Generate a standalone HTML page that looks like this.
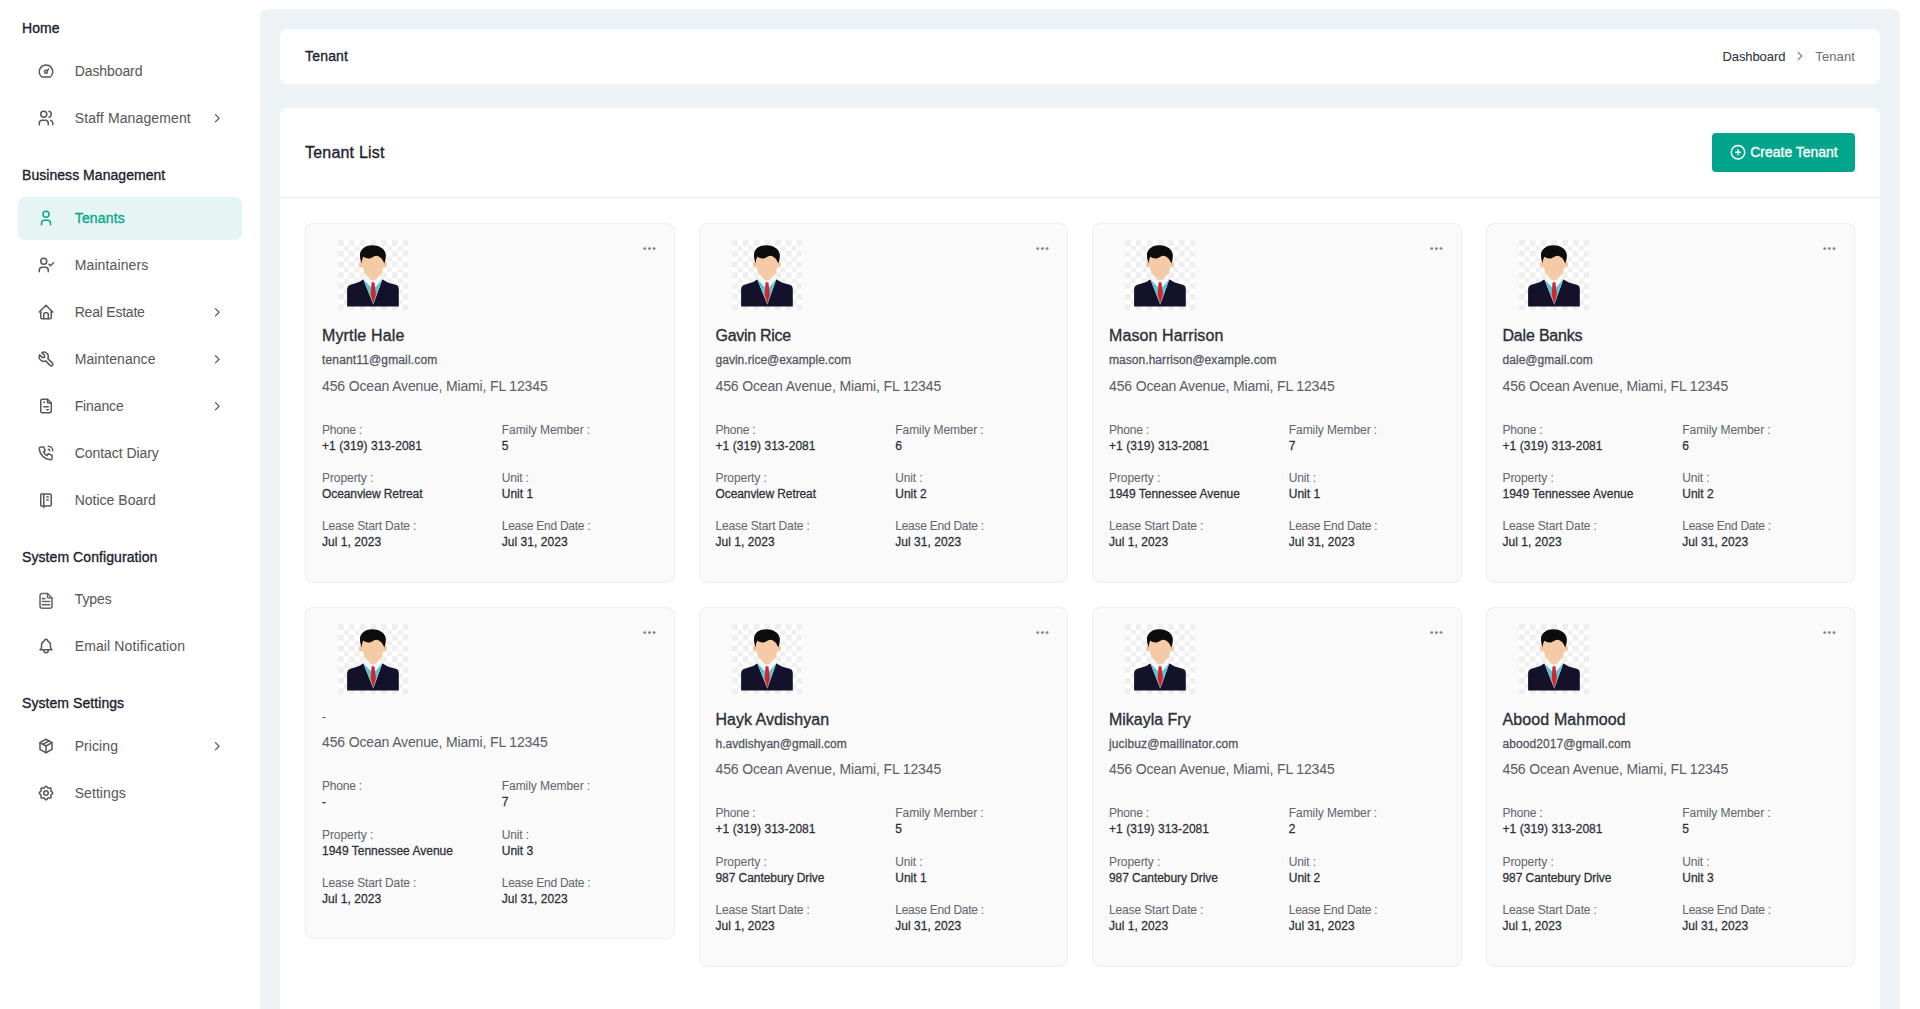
<!DOCTYPE html>
<html lang="en"><head><meta charset="utf-8"><title>Tenant</title>
<style>
*{box-sizing:border-box}
html,body{margin:0;padding:0}
body{width:1920px;height:1009px;overflow:hidden;background:#fff;position:relative;font-family:"Liberation Sans", sans-serif;font-size:14px;line-height:1.5;color:#5a5f69;-webkit-font-smoothing:antialiased;-webkit-text-stroke:.05px currentColor}
h4,h5,p,ul{margin:0;padding:0}
ul{list-style:none}
svg{display:block;flex:none}

/* ---------- sidebar ---------- */
.sidebar{position:absolute;left:0;top:0;width:260px;height:1009px;background:#fff}
.sidebar ul{position:absolute;left:18px;top:-3px;width:224px}
.cap{height:53px;padding:21px 0 0 4px;line-height:20px;font-size:14px;font-weight:400;-webkit-text-stroke:.34px currentColor;color:#1c2230;white-space:nowrap}
.cap.c52{height:52px}
.item{position:relative;height:43px;margin-bottom:4px;border-radius:7px;color:#585858;font-size:14px;line-height:43px;white-space:nowrap}
.item .ic{position:absolute;left:19px;top:12px;width:18px;height:18px;stroke-width:2}
.item .ic2{position:absolute;left:18px;top:13px;width:20px;height:20px;color:#686868}
.item .lbl{position:absolute;left:56.7px;top:0}
.item .chev{position:absolute;left:191.5px;top:14px;width:14.5px;height:14.5px;stroke-width:2}
.item.active{background:#e5f5f3;color:#0ea58d}
.item.active .lbl{font-weight:400;-webkit-text-stroke:.34px currentColor}

/* ---------- main ---------- */
.main{position:absolute;left:260px;top:9px;width:1640px;height:1000px;background:#edf2f7;border-radius:8px 8px 0 0}
.crumb{position:absolute;left:20px;top:20px;width:1600px;height:55px;background:#fff;border-radius:7px}
.title{position:absolute;left:25px;top:0;line-height:55px;font-size:14px;font-weight:400;-webkit-text-stroke:.34px currentColor;color:#1c2230}
.bc{position:absolute;right:25px;top:0;height:55px;display:flex;align-items:center;font-size:13px;line-height:55px}
.bc1{color:#2a3140}
.bc2{color:#6b6f75}
.bcchev{width:14px;height:14px;margin:0 8px;color:#83888f;stroke-width:2.2}
.panel{position:absolute;left:20px;top:99px;width:1600px;height:901px;background:#fff;border-radius:7px 7px 0 0}
.phead{position:relative;height:90px;border-bottom:1px solid #ebebeb}
.ptitle{position:absolute;left:25px;top:0;line-height:89px;font-size:16px;font-weight:400;-webkit-text-stroke:.34px currentColor;color:#1c2230}
.btn{position:absolute;right:25px;top:25px;width:143px;height:39px;border-radius:4px;background:#00a58c;color:#fff;display:flex;align-items:center;justify-content:center;font-size:14px;font-weight:400;-webkit-text-stroke:.34px currentColor;white-space:nowrap}
.btn .plus{width:18px;height:18px;margin-right:3px;stroke-width:2}

/* ---------- cards ---------- */
.cards{position:absolute;left:25px;top:115px;width:1550px;display:grid;grid-template-columns:repeat(4,369.5px);column-gap:24px;row-gap:24px;align-items:start}
.card{position:relative;border:1px solid #eee;border-radius:8px;background:#fafafa;padding:16px 16px 0 16px;height:359.8px}
.card.noname{height:332.6px}
.dots{position:absolute;right:16px;top:16px;width:16px;height:16px;color:#7a889c}
.avatar{width:70px;height:70px;margin:0 0 16px 16px;background:conic-gradient(#fff 25%,#efefef 0 50%,#fff 0 75%,#efefef 0) 0 0/10.77px 10.77px}
.name{font-size:16px;line-height:19.2px;margin-bottom:8px;font-weight:400;-webkit-text-stroke:.34px currentColor;color:#2b3038;white-space:nowrap}
.email,.dash{font-size:12px;line-height:14.4px;margin-bottom:8px;font-weight:400;-webkit-text-stroke:.255px currentColor;color:#50555e;white-space:nowrap}
.dash{font-weight:400;-webkit-text-stroke:.05px currentColor}
.addr{font-size:14px;line-height:21px;margin-bottom:24px;color:#5a5f69;white-space:nowrap}
.grid{display:grid;grid-template-columns:179.75px 1fr}
.f{margin-bottom:16px;white-space:nowrap}
.k{font-size:12px;line-height:18px;color:#62676f}
.v{font-size:12px;line-height:14.4px;font-weight:400;-webkit-text-stroke:.255px currentColor;color:#2b3038}

</style></head>
<body>

<nav class="sidebar"><ul>
<li class="cap first" style="letter-spacing:0.055px">Home</li>
<li class="item"><svg class="ic" viewBox="0 0 24 24" fill="none" stroke="currentColor" stroke-width="2" stroke-linecap="round" stroke-linejoin="round"><circle cx="12" cy="13" r="2"/><path d="M13.45 11.55L15.5 9.5"/><path d="M6.4 20a9 9 0 1 1 11.2 0z"/></svg><span class="lbl" style="letter-spacing:-0.087px">Dashboard</span></li>
<li class="item"><svg class="ic" viewBox="0 0 24 24" fill="none" stroke="currentColor" stroke-width="2" stroke-linecap="round" stroke-linejoin="round"><circle cx="9" cy="7" r="4"/><path d="M3 21v-2a4 4 0 0 1 4 -4h4a4 4 0 0 1 4 4v2"/><path d="M16 3.13a4 4 0 0 1 0 7.75"/><path d="M21 21v-2a4 4 0 0 0 -3 -3.85"/></svg><span class="lbl" style="letter-spacing:0.128px">Staff Management</span><svg class="chev" viewBox="0 0 24 24" fill="none" stroke="currentColor" stroke-width="2" stroke-linecap="round" stroke-linejoin="round"><path d="M9 6l6 6l-6 6"/></svg></li>
<li class="cap" style="letter-spacing:0.046px">Business Management</li>
<li class="item active"><svg class="ic" viewBox="0 0 24 24" fill="none" stroke="currentColor" stroke-width="2" stroke-linecap="round" stroke-linejoin="round"><circle cx="12" cy="7" r="4"/><path d="M6 21v-2a4 4 0 0 1 4 -4h4a4 4 0 0 1 4 4v2"/></svg><span class="lbl" style="letter-spacing:0.192px">Tenants</span></li>
<li class="item"><svg class="ic" viewBox="0 0 24 24" fill="none" stroke="currentColor" stroke-width="2" stroke-linecap="round" stroke-linejoin="round"><circle cx="9" cy="7" r="4"/><path d="M3 21v-2a4 4 0 0 1 4 -4h4a4 4 0 0 1 4 4v2"/><path d="M16 11l2 2l4 -4"/></svg><span class="lbl" style="letter-spacing:0.121px">Maintainers</span></li>
<li class="item"><svg class="ic" viewBox="0 0 24 24" fill="none" stroke="currentColor" stroke-width="2" stroke-linecap="round" stroke-linejoin="round"><path d="M5 12H3l9 -9l9 9h-2"/><path d="M5 12v7a2 2 0 0 0 2 2h10a2 2 0 0 0 2 -2v-7"/><path d="M9 21v-6a2 2 0 0 1 2 -2h2a2 2 0 0 1 2 2v6"/></svg><span class="lbl" style="letter-spacing:-0.222px">Real Estate</span><svg class="chev" viewBox="0 0 24 24" fill="none" stroke="currentColor" stroke-width="2" stroke-linecap="round" stroke-linejoin="round"><path d="M9 6l6 6l-6 6"/></svg></li>
<li class="item"><svg class="ic" viewBox="0 0 24 24" fill="none" stroke="currentColor" stroke-width="2" stroke-linecap="round" stroke-linejoin="round"><path d="M7 10h3v-3l-3.5 -3.5a6 6 0 0 1 8 8l6 6a2 2 0 0 1 -3 3l-6 -6a6 6 0 0 1 -8 -8l3.5 3.5"/></svg><span class="lbl" style="letter-spacing:0.058px">Maintenance</span><svg class="chev" viewBox="0 0 24 24" fill="none" stroke="currentColor" stroke-width="2" stroke-linecap="round" stroke-linejoin="round"><path d="M9 6l6 6l-6 6"/></svg></li>
<li class="item"><svg class="ic" viewBox="0 0 24 24" fill="none" stroke="currentColor" stroke-width="2" stroke-linecap="round" stroke-linejoin="round"><path d="M14 3v4a1 1 0 0 0 1 1h4"/><path d="M17 21h-10a2 2 0 0 1 -2 -2v-14a2 2 0 0 1 2 -2h7l5 5v11a2 2 0 0 1 -2 2z"/><path d="M9 7h1"/><path d="M9 13h6"/><path d="M13 17h2"/></svg><span class="lbl" style="letter-spacing:-0.118px">Finance</span><svg class="chev" viewBox="0 0 24 24" fill="none" stroke="currentColor" stroke-width="2" stroke-linecap="round" stroke-linejoin="round"><path d="M9 6l6 6l-6 6"/></svg></li>
<li class="item"><svg class="ic" viewBox="0 0 24 24" fill="none" stroke="currentColor" stroke-width="2" stroke-linecap="round" stroke-linejoin="round"><path d="M5 4h4l2 5l-2.5 1.5a11 11 0 0 0 5 5l1.5 -2.5l5 2v4a2 2 0 0 1 -2 2a16 16 0 0 1 -15 -15a2 2 0 0 1 2 -2"/><path d="M15 7a2 2 0 0 1 2 2"/><path d="M15 3a6 6 0 0 1 6 6"/></svg><span class="lbl" style="letter-spacing:-0.054px">Contact Diary</span></li>
<li class="item"><svg class="ic" viewBox="0 0 24 24" fill="none" stroke="currentColor" stroke-width="2" stroke-linecap="round" stroke-linejoin="round"><path d="M6 4h11a2 2 0 0 1 2 2v12a2 2 0 0 1 -2 2h-11a1 1 0 0 1 -1 -1v-14a1 1 0 0 1 1 -1m3 0v18"/><path d="M13 8h2"/><path d="M13 12h2"/></svg><span class="lbl" style="letter-spacing:0.007px">Notice Board</span></li>
<li class="cap c52" style="letter-spacing:0.077px">System Configuration</li>
<li class="item"><svg class="ic2" viewBox="0 0 20 20" fill="none" stroke="currentColor" stroke-width="1.55" stroke-linecap="round" stroke-linejoin="round"><path d="M11.500 2.500H6a2 2 0 0 0-2 2v10.700a2 2 0 0 0 2 2h8a2 2 0 0 0 2-2V7z"/><path d="M11.500 2.500V6a1 1 0 0 0 1 1H16"/><path d="M6.300 7.600h2.500"/><path d="M6.300 10.550h7.300"/><path d="M6.300 13.650h7.300"/></svg><span class="lbl" style="letter-spacing:-0.072px">Types</span></li>
<li class="item"><svg class="ic" viewBox="0 0 24 24" fill="none" stroke="currentColor" stroke-width="2" stroke-linecap="round" stroke-linejoin="round"><path d="M10 5a2 2 0 0 1 4 0a7 7 0 0 1 4 6v3a4 4 0 0 0 2 3h-16a4 4 0 0 0 2 -3v-3a7 7 0 0 1 4 -6"/><path d="M9 17v1a3 3 0 0 0 6 0v-1"/></svg><span class="lbl" style="letter-spacing:0.130px">Email Notification</span></li>
<li class="cap" style="letter-spacing:0.069px">System Settings</li>
<li class="item"><svg class="ic" viewBox="0 0 24 24" fill="none" stroke="currentColor" stroke-width="2" stroke-linecap="round" stroke-linejoin="round"><path d="M12 3l8 4.5v9l-8 4.5l-8 -4.5v-9z"/><path d="M12 12l8 -4.5"/><path d="M12 12v9"/><path d="M12 12l-8 -4.5"/><path d="M16 5.25l-8 4.5"/></svg><span class="lbl" style="letter-spacing:0.074px">Pricing</span><svg class="chev" viewBox="0 0 24 24" fill="none" stroke="currentColor" stroke-width="2" stroke-linecap="round" stroke-linejoin="round"><path d="M9 6l6 6l-6 6"/></svg></li>
<li class="item"><svg class="ic" viewBox="0 0 24 24" fill="none" stroke="currentColor" stroke-width="2" stroke-linecap="round" stroke-linejoin="round"><path d="M10.325 4.317c.426 -1.756 2.924 -1.756 3.35 0a1.724 1.724 0 0 0 2.573 1.066c1.543 -.94 3.31 .826 2.37 2.37a1.724 1.724 0 0 0 1.065 2.572c1.756 .426 1.756 2.924 0 3.35a1.724 1.724 0 0 0 -1.066 2.573c.94 1.543 -.826 3.31 -2.37 2.37a1.724 1.724 0 0 0 -2.572 1.065c-.426 1.756 -2.924 1.756 -3.35 0a1.724 1.724 0 0 0 -2.573 -1.066c-1.543 .94 -3.31 -.826 -2.37 -2.37a1.724 1.724 0 0 0 -1.065 -2.572c-1.756 -.426 -1.756 -2.924 0 -3.35a1.724 1.724 0 0 0 1.066 -2.573c-.94 -1.543 .826 -3.31 2.37 -2.37c1 .608 2.296 .07 2.572 -1.065z"/><circle cx="12" cy="12" r="3"/></svg><span class="lbl" style="letter-spacing:0.066px">Settings</span></li>
</ul></nav>
<main class="main">
<header class="crumb"><h4 class="title" style="letter-spacing:0.190px">Tenant</h4>
<div class="bc"><span class="bc1" style="letter-spacing:-0.082px">Dashboard</span><svg class="bcchev" viewBox="0 1.700 24 24" fill="none" stroke="currentColor" stroke-width="2" stroke-linecap="round" stroke-linejoin="round"><path d="M9 6l6 6l-6 6"/></svg><span class="bc2" style="letter-spacing:0.112px">Tenant</span></div></header>
<section class="panel">
<div class="phead"><h4 class="ptitle" style="letter-spacing:0.202px">Tenant List</h4><a class="btn"><svg class="plus" viewBox="0 1 24 24" fill="none" stroke="currentColor" stroke-width="2" stroke-linecap="round" stroke-linejoin="round"><circle cx="12" cy="12" r="9"/><path d="M9 12h6"/><path d="M12 9v6"/></svg><span style="letter-spacing:-0.016px">Create Tenant</span></a></div>
<div class="cards">
<article class="card"><svg class="dots" viewBox="0.9 -0.9 24 24" fill="currentColor"><circle cx="5" cy="12" r="2.2"/><circle cx="12" cy="12" r="2.2"/><circle cx="19" cy="12" r="2.2"/></svg><svg class="avatar" viewBox="0 0 70 70" role="img" aria-label="Tenant photo"><path d="M9.1 66.600V50c0-3 1-4.500 3.500-5.300l8.700-2.600 4-2.900 10 25.300 9-25.300 5.500 3.400 8.600 2.300c2 .6 2.400 2.100 2.400 5.100v16.600z" fill="#14122b"/><path d="M25.300 39.200L35.300 64.500 44.300 39.200z" fill="#5cc4cc"/><path d="M25.300 39.200L30 38.300 35.100 40.500 40 38.300 44.300 39.200 37.200 47.500 35.100 43 33.200 47.500z" fill="#f3f6f9"/><path d="M33.600 42.300h2.800l1.500 12.100-2.600 9.900-2.600-9.900z" fill="#d8232f"/><ellipse cx="22.600" cy="24.600" rx="1.700" ry="2.800" fill="#f2c6a2"/><ellipse cx="47.400" cy="24.600" rx="1.700" ry="2.800" fill="#f2c6a2"/><path d="M23 14c0-5 5-8 12-8s12 3 12 8l-.6 10c-.3 2.500-1 4-1.800 5.500L44.100 32.900 38.300 39.100c-1.600 1.600-4.800 1.600-6.400 0L26.300 32.900 25.400 29.500c-.8-1.500-1.500-3-1.800-5.500z" fill="#f4caa7"/><path d="M23.400 23.500C22.500 20 21.800 17 22 14.300 22.500 8.500 28 5.200 34.300 5.200 41 5.200 47.300 8.500 47.800 15 48 18 47.300 21 46.400 23.500 45.500 21.500 44.500 20 43.500 18.600 42 16.800 40 15.700 38.200 15.700 35.500 15.700 33.500 18.600 30.700 18.600 28.500 18.600 27 17.500 25.200 16.800 24.300 19 23.800 21 23.400 23.500Z" fill="#0d0b0c"/></svg>
<h5 class="name" style="letter-spacing:0.141px">Myrtle Hale</h5><p class="email" style="letter-spacing:0.148px">tenant11@gmail.com</p><p class="addr" style="letter-spacing:-0.147px">456 Ocean Avenue, Miami, FL 12345</p>
<div class="grid">
<div class="f"><div class="k" style="letter-spacing:-0.210px">Phone :</div><div class="v" style="letter-spacing:0.059px">+1 (319) 313-2081</div></div>
<div class="f"><div class="k" style="letter-spacing:-0.064px">Family Member :</div><div class="v" style="letter-spacing:0.141px">5</div></div>
<div class="f"><div class="k" style="letter-spacing:-0.072px">Property :</div><div class="v" style="letter-spacing:-0.095px">Oceanview Retreat</div></div>
<div class="f"><div class="k" style="letter-spacing:-0.146px">Unit :</div><div class="v" style="letter-spacing:0.005px">Unit 1</div></div>
<div class="f"><div class="k" style="letter-spacing:-0.135px">Lease Start Date :</div><div class="v" style="letter-spacing:0.040px">Jul 1, 2023</div></div>
<div class="f"><div class="k" style="letter-spacing:-0.255px">Lease End Date :</div><div class="v" style="letter-spacing:0.049px">Jul 31, 2023</div></div>
</div></article>
<article class="card"><svg class="dots" viewBox="0.9 -0.9 24 24" fill="currentColor"><circle cx="5" cy="12" r="2.2"/><circle cx="12" cy="12" r="2.2"/><circle cx="19" cy="12" r="2.2"/></svg><svg class="avatar" viewBox="0 0 70 70" role="img" aria-label="Tenant photo"><path d="M9.1 66.600V50c0-3 1-4.500 3.500-5.300l8.700-2.600 4-2.900 10 25.300 9-25.300 5.500 3.400 8.600 2.300c2 .6 2.400 2.100 2.400 5.100v16.600z" fill="#14122b"/><path d="M25.300 39.200L35.300 64.500 44.300 39.200z" fill="#5cc4cc"/><path d="M25.300 39.200L30 38.300 35.100 40.500 40 38.300 44.300 39.200 37.200 47.500 35.100 43 33.200 47.500z" fill="#f3f6f9"/><path d="M33.600 42.300h2.800l1.500 12.100-2.600 9.900-2.600-9.900z" fill="#d8232f"/><ellipse cx="22.600" cy="24.600" rx="1.700" ry="2.800" fill="#f2c6a2"/><ellipse cx="47.400" cy="24.600" rx="1.700" ry="2.800" fill="#f2c6a2"/><path d="M23 14c0-5 5-8 12-8s12 3 12 8l-.6 10c-.3 2.500-1 4-1.800 5.500L44.100 32.900 38.300 39.100c-1.600 1.600-4.800 1.600-6.400 0L26.300 32.900 25.400 29.500c-.8-1.500-1.500-3-1.800-5.500z" fill="#f4caa7"/><path d="M23.400 23.500C22.500 20 21.800 17 22 14.300 22.500 8.500 28 5.200 34.300 5.200 41 5.200 47.300 8.500 47.800 15 48 18 47.300 21 46.400 23.500 45.500 21.500 44.500 20 43.500 18.600 42 16.800 40 15.700 38.200 15.700 35.500 15.700 33.500 18.600 30.700 18.600 28.500 18.600 27 17.500 25.200 16.800 24.300 19 23.800 21 23.400 23.500Z" fill="#0d0b0c"/></svg>
<h5 class="name" style="letter-spacing:-0.287px">Gavin Rice</h5><p class="email" style="letter-spacing:0.025px">gavin.rice@example.com</p><p class="addr" style="letter-spacing:-0.147px">456 Ocean Avenue, Miami, FL 12345</p>
<div class="grid">
<div class="f"><div class="k" style="letter-spacing:-0.210px">Phone :</div><div class="v" style="letter-spacing:0.059px">+1 (319) 313-2081</div></div>
<div class="f"><div class="k" style="letter-spacing:-0.064px">Family Member :</div><div class="v" style="letter-spacing:0.141px">6</div></div>
<div class="f"><div class="k" style="letter-spacing:-0.072px">Property :</div><div class="v" style="letter-spacing:-0.095px">Oceanview Retreat</div></div>
<div class="f"><div class="k" style="letter-spacing:-0.146px">Unit :</div><div class="v" style="letter-spacing:0.005px">Unit 2</div></div>
<div class="f"><div class="k" style="letter-spacing:-0.135px">Lease Start Date :</div><div class="v" style="letter-spacing:0.040px">Jul 1, 2023</div></div>
<div class="f"><div class="k" style="letter-spacing:-0.255px">Lease End Date :</div><div class="v" style="letter-spacing:0.049px">Jul 31, 2023</div></div>
</div></article>
<article class="card"><svg class="dots" viewBox="0.9 -0.9 24 24" fill="currentColor"><circle cx="5" cy="12" r="2.2"/><circle cx="12" cy="12" r="2.2"/><circle cx="19" cy="12" r="2.2"/></svg><svg class="avatar" viewBox="0 0 70 70" role="img" aria-label="Tenant photo"><path d="M9.1 66.600V50c0-3 1-4.500 3.500-5.300l8.700-2.600 4-2.900 10 25.300 9-25.300 5.500 3.400 8.600 2.300c2 .6 2.400 2.100 2.400 5.100v16.600z" fill="#14122b"/><path d="M25.300 39.200L35.300 64.500 44.300 39.200z" fill="#5cc4cc"/><path d="M25.300 39.200L30 38.300 35.100 40.500 40 38.300 44.300 39.200 37.200 47.500 35.100 43 33.200 47.500z" fill="#f3f6f9"/><path d="M33.600 42.300h2.800l1.500 12.100-2.600 9.900-2.600-9.900z" fill="#d8232f"/><ellipse cx="22.600" cy="24.600" rx="1.700" ry="2.800" fill="#f2c6a2"/><ellipse cx="47.400" cy="24.600" rx="1.700" ry="2.800" fill="#f2c6a2"/><path d="M23 14c0-5 5-8 12-8s12 3 12 8l-.6 10c-.3 2.500-1 4-1.800 5.500L44.100 32.900 38.300 39.100c-1.600 1.600-4.800 1.600-6.400 0L26.300 32.900 25.400 29.500c-.8-1.500-1.500-3-1.800-5.500z" fill="#f4caa7"/><path d="M23.400 23.500C22.500 20 21.800 17 22 14.300 22.500 8.500 28 5.200 34.300 5.200 41 5.200 47.300 8.500 47.800 15 48 18 47.300 21 46.400 23.500 45.500 21.500 44.500 20 43.500 18.600 42 16.800 40 15.700 38.200 15.700 35.500 15.700 33.500 18.600 30.700 18.600 28.500 18.600 27 17.500 25.200 16.800 24.300 19 23.800 21 23.400 23.500Z" fill="#0d0b0c"/></svg>
<h5 class="name" style="letter-spacing:0.105px">Mason Harrison</h5><p class="email" style="letter-spacing:0.049px">mason.harrison@example.com</p><p class="addr" style="letter-spacing:-0.147px">456 Ocean Avenue, Miami, FL 12345</p>
<div class="grid">
<div class="f"><div class="k" style="letter-spacing:-0.210px">Phone :</div><div class="v" style="letter-spacing:0.059px">+1 (319) 313-2081</div></div>
<div class="f"><div class="k" style="letter-spacing:-0.064px">Family Member :</div><div class="v" style="letter-spacing:0.141px">7</div></div>
<div class="f"><div class="k" style="letter-spacing:-0.072px">Property :</div><div class="v" style="letter-spacing:-0.005px">1949 Tennessee Avenue</div></div>
<div class="f"><div class="k" style="letter-spacing:-0.146px">Unit :</div><div class="v" style="letter-spacing:0.005px">Unit 1</div></div>
<div class="f"><div class="k" style="letter-spacing:-0.135px">Lease Start Date :</div><div class="v" style="letter-spacing:0.040px">Jul 1, 2023</div></div>
<div class="f"><div class="k" style="letter-spacing:-0.255px">Lease End Date :</div><div class="v" style="letter-spacing:0.049px">Jul 31, 2023</div></div>
</div></article>
<article class="card"><svg class="dots" viewBox="0.9 -0.9 24 24" fill="currentColor"><circle cx="5" cy="12" r="2.2"/><circle cx="12" cy="12" r="2.2"/><circle cx="19" cy="12" r="2.2"/></svg><svg class="avatar" viewBox="0 0 70 70" role="img" aria-label="Tenant photo"><path d="M9.1 66.600V50c0-3 1-4.500 3.500-5.300l8.700-2.600 4-2.900 10 25.300 9-25.300 5.500 3.400 8.600 2.300c2 .6 2.400 2.100 2.400 5.100v16.600z" fill="#14122b"/><path d="M25.300 39.200L35.300 64.500 44.300 39.200z" fill="#5cc4cc"/><path d="M25.300 39.200L30 38.300 35.100 40.500 40 38.300 44.300 39.200 37.200 47.500 35.100 43 33.200 47.500z" fill="#f3f6f9"/><path d="M33.600 42.300h2.800l1.500 12.100-2.600 9.900-2.600-9.900z" fill="#d8232f"/><ellipse cx="22.600" cy="24.600" rx="1.700" ry="2.800" fill="#f2c6a2"/><ellipse cx="47.400" cy="24.600" rx="1.700" ry="2.800" fill="#f2c6a2"/><path d="M23 14c0-5 5-8 12-8s12 3 12 8l-.6 10c-.3 2.500-1 4-1.800 5.500L44.100 32.900 38.300 39.100c-1.600 1.600-4.800 1.600-6.400 0L26.300 32.900 25.400 29.500c-.8-1.500-1.500-3-1.800-5.500z" fill="#f4caa7"/><path d="M23.400 23.500C22.500 20 21.800 17 22 14.300 22.500 8.500 28 5.200 34.300 5.200 41 5.200 47.300 8.500 47.800 15 48 18 47.300 21 46.400 23.500 45.500 21.500 44.500 20 43.500 18.600 42 16.800 40 15.700 38.200 15.700 35.500 15.700 33.500 18.600 30.700 18.600 28.500 18.600 27 17.500 25.200 16.800 24.300 19 23.800 21 23.400 23.500Z" fill="#0d0b0c"/></svg>
<h5 class="name" style="letter-spacing:-0.192px">Dale Banks</h5><p class="email" style="letter-spacing:0.045px">dale@gmail.com</p><p class="addr" style="letter-spacing:-0.147px">456 Ocean Avenue, Miami, FL 12345</p>
<div class="grid">
<div class="f"><div class="k" style="letter-spacing:-0.210px">Phone :</div><div class="v" style="letter-spacing:0.059px">+1 (319) 313-2081</div></div>
<div class="f"><div class="k" style="letter-spacing:-0.064px">Family Member :</div><div class="v" style="letter-spacing:0.141px">6</div></div>
<div class="f"><div class="k" style="letter-spacing:-0.072px">Property :</div><div class="v" style="letter-spacing:-0.005px">1949 Tennessee Avenue</div></div>
<div class="f"><div class="k" style="letter-spacing:-0.146px">Unit :</div><div class="v" style="letter-spacing:0.005px">Unit 2</div></div>
<div class="f"><div class="k" style="letter-spacing:-0.135px">Lease Start Date :</div><div class="v" style="letter-spacing:0.040px">Jul 1, 2023</div></div>
<div class="f"><div class="k" style="letter-spacing:-0.255px">Lease End Date :</div><div class="v" style="letter-spacing:0.049px">Jul 31, 2023</div></div>
</div></article>
<article class="card noname"><svg class="dots" viewBox="0.9 -0.9 24 24" fill="currentColor"><circle cx="5" cy="12" r="2.2"/><circle cx="12" cy="12" r="2.2"/><circle cx="19" cy="12" r="2.2"/></svg><svg class="avatar" viewBox="0 0 70 70" role="img" aria-label="Tenant photo"><path d="M9.1 66.600V50c0-3 1-4.500 3.500-5.300l8.700-2.600 4-2.900 10 25.300 9-25.300 5.500 3.400 8.600 2.300c2 .6 2.400 2.100 2.400 5.100v16.600z" fill="#14122b"/><path d="M25.300 39.200L35.300 64.500 44.300 39.200z" fill="#5cc4cc"/><path d="M25.300 39.200L30 38.300 35.100 40.500 40 38.300 44.300 39.200 37.200 47.500 35.100 43 33.200 47.500z" fill="#f3f6f9"/><path d="M33.600 42.300h2.800l1.500 12.100-2.600 9.900-2.600-9.900z" fill="#d8232f"/><ellipse cx="22.600" cy="24.600" rx="1.700" ry="2.800" fill="#f2c6a2"/><ellipse cx="47.400" cy="24.600" rx="1.700" ry="2.800" fill="#f2c6a2"/><path d="M23 14c0-5 5-8 12-8s12 3 12 8l-.6 10c-.3 2.500-1 4-1.800 5.500L44.100 32.900 38.300 39.100c-1.600 1.600-4.800 1.600-6.400 0L26.300 32.900 25.400 29.500c-.8-1.500-1.500-3-1.800-5.500z" fill="#f4caa7"/><path d="M23.400 23.500C22.500 20 21.800 17 22 14.300 22.500 8.500 28 5.200 34.300 5.200 41 5.200 47.300 8.500 47.800 15 48 18 47.300 21 46.400 23.500 45.500 21.500 44.500 20 43.500 18.600 42 16.800 40 15.700 38.200 15.700 35.500 15.700 33.500 18.600 30.700 18.600 28.500 18.600 27 17.500 25.200 16.800 24.300 19 23.800 21 23.400 23.500Z" fill="#0d0b0c"/></svg>
<p class="dash" style="letter-spacing:-0.672px">-</p><p class="addr" style="letter-spacing:-0.147px">456 Ocean Avenue, Miami, FL 12345</p>
<div class="grid">
<div class="f"><div class="k" style="letter-spacing:-0.210px">Phone :</div><div class="v" style="letter-spacing:0.078px">-</div></div>
<div class="f"><div class="k" style="letter-spacing:-0.064px">Family Member :</div><div class="v" style="letter-spacing:0.141px">7</div></div>
<div class="f"><div class="k" style="letter-spacing:-0.072px">Property :</div><div class="v" style="letter-spacing:-0.005px">1949 Tennessee Avenue</div></div>
<div class="f"><div class="k" style="letter-spacing:-0.146px">Unit :</div><div class="v" style="letter-spacing:0.005px">Unit 3</div></div>
<div class="f"><div class="k" style="letter-spacing:-0.135px">Lease Start Date :</div><div class="v" style="letter-spacing:0.040px">Jul 1, 2023</div></div>
<div class="f"><div class="k" style="letter-spacing:-0.255px">Lease End Date :</div><div class="v" style="letter-spacing:0.049px">Jul 31, 2023</div></div>
</div></article>
<article class="card"><svg class="dots" viewBox="0.9 -0.9 24 24" fill="currentColor"><circle cx="5" cy="12" r="2.2"/><circle cx="12" cy="12" r="2.2"/><circle cx="19" cy="12" r="2.2"/></svg><svg class="avatar" viewBox="0 0 70 70" role="img" aria-label="Tenant photo"><path d="M9.1 66.600V50c0-3 1-4.500 3.500-5.300l8.700-2.600 4-2.900 10 25.300 9-25.300 5.500 3.400 8.600 2.300c2 .6 2.400 2.100 2.400 5.100v16.600z" fill="#14122b"/><path d="M25.300 39.200L35.300 64.500 44.300 39.200z" fill="#5cc4cc"/><path d="M25.300 39.200L30 38.300 35.100 40.500 40 38.300 44.300 39.200 37.200 47.500 35.100 43 33.200 47.500z" fill="#f3f6f9"/><path d="M33.600 42.300h2.800l1.500 12.100-2.600 9.900-2.600-9.900z" fill="#d8232f"/><ellipse cx="22.600" cy="24.600" rx="1.700" ry="2.800" fill="#f2c6a2"/><ellipse cx="47.400" cy="24.600" rx="1.700" ry="2.800" fill="#f2c6a2"/><path d="M23 14c0-5 5-8 12-8s12 3 12 8l-.6 10c-.3 2.500-1 4-1.800 5.500L44.100 32.900 38.300 39.100c-1.600 1.600-4.800 1.600-6.400 0L26.300 32.900 25.400 29.500c-.8-1.500-1.500-3-1.800-5.500z" fill="#f4caa7"/><path d="M23.400 23.500C22.500 20 21.800 17 22 14.300 22.500 8.500 28 5.200 34.300 5.200 41 5.200 47.300 8.500 47.800 15 48 18 47.300 21 46.400 23.500 45.500 21.500 44.500 20 43.500 18.600 42 16.800 40 15.700 38.200 15.700 35.500 15.700 33.500 18.600 30.700 18.600 28.500 18.600 27 17.500 25.200 16.800 24.300 19 23.800 21 23.400 23.500Z" fill="#0d0b0c"/></svg>
<h5 class="name">Hayk Avdishyan</h5><p class="email" style="letter-spacing:0.020px">h.avdishyan@gmail.com</p><p class="addr" style="letter-spacing:-0.147px">456 Ocean Avenue, Miami, FL 12345</p>
<div class="grid">
<div class="f"><div class="k" style="letter-spacing:-0.210px">Phone :</div><div class="v" style="letter-spacing:0.059px">+1 (319) 313-2081</div></div>
<div class="f"><div class="k" style="letter-spacing:-0.064px">Family Member :</div><div class="v" style="letter-spacing:0.141px">5</div></div>
<div class="f"><div class="k" style="letter-spacing:-0.072px">Property :</div><div class="v" style="letter-spacing:-0.060px">987 Cantebury Drive</div></div>
<div class="f"><div class="k" style="letter-spacing:-0.146px">Unit :</div><div class="v" style="letter-spacing:0.005px">Unit 1</div></div>
<div class="f"><div class="k" style="letter-spacing:-0.135px">Lease Start Date :</div><div class="v" style="letter-spacing:0.040px">Jul 1, 2023</div></div>
<div class="f"><div class="k" style="letter-spacing:-0.255px">Lease End Date :</div><div class="v" style="letter-spacing:0.049px">Jul 31, 2023</div></div>
</div></article>
<article class="card"><svg class="dots" viewBox="0.9 -0.9 24 24" fill="currentColor"><circle cx="5" cy="12" r="2.2"/><circle cx="12" cy="12" r="2.2"/><circle cx="19" cy="12" r="2.2"/></svg><svg class="avatar" viewBox="0 0 70 70" role="img" aria-label="Tenant photo"><path d="M9.1 66.600V50c0-3 1-4.500 3.500-5.300l8.700-2.600 4-2.900 10 25.300 9-25.300 5.500 3.400 8.600 2.300c2 .6 2.400 2.100 2.400 5.100v16.600z" fill="#14122b"/><path d="M25.300 39.200L35.300 64.500 44.300 39.200z" fill="#5cc4cc"/><path d="M25.300 39.200L30 38.300 35.100 40.500 40 38.300 44.300 39.200 37.200 47.500 35.100 43 33.200 47.500z" fill="#f3f6f9"/><path d="M33.600 42.300h2.800l1.500 12.100-2.600 9.900-2.600-9.900z" fill="#d8232f"/><ellipse cx="22.600" cy="24.600" rx="1.700" ry="2.800" fill="#f2c6a2"/><ellipse cx="47.400" cy="24.600" rx="1.700" ry="2.800" fill="#f2c6a2"/><path d="M23 14c0-5 5-8 12-8s12 3 12 8l-.6 10c-.3 2.500-1 4-1.800 5.500L44.100 32.900 38.300 39.100c-1.600 1.600-4.800 1.600-6.400 0L26.300 32.900 25.400 29.500c-.8-1.500-1.500-3-1.800-5.500z" fill="#f4caa7"/><path d="M23.400 23.500C22.500 20 21.800 17 22 14.300 22.500 8.500 28 5.200 34.300 5.200 41 5.200 47.300 8.500 47.800 15 48 18 47.300 21 46.400 23.500 45.500 21.500 44.500 20 43.500 18.600 42 16.800 40 15.700 38.200 15.700 35.500 15.700 33.500 18.600 30.700 18.600 28.500 18.600 27 17.500 25.200 16.800 24.300 19 23.800 21 23.400 23.500Z" fill="#0d0b0c"/></svg>
<h5 class="name" style="letter-spacing:-0.009px">Mikayla Fry</h5><p class="email" style="letter-spacing:0.114px">jucibuz@mailinator.com</p><p class="addr" style="letter-spacing:-0.147px">456 Ocean Avenue, Miami, FL 12345</p>
<div class="grid">
<div class="f"><div class="k" style="letter-spacing:-0.210px">Phone :</div><div class="v" style="letter-spacing:0.059px">+1 (319) 313-2081</div></div>
<div class="f"><div class="k" style="letter-spacing:-0.064px">Family Member :</div><div class="v" style="letter-spacing:0.141px">2</div></div>
<div class="f"><div class="k" style="letter-spacing:-0.072px">Property :</div><div class="v" style="letter-spacing:-0.060px">987 Cantebury Drive</div></div>
<div class="f"><div class="k" style="letter-spacing:-0.146px">Unit :</div><div class="v" style="letter-spacing:0.005px">Unit 2</div></div>
<div class="f"><div class="k" style="letter-spacing:-0.135px">Lease Start Date :</div><div class="v" style="letter-spacing:0.040px">Jul 1, 2023</div></div>
<div class="f"><div class="k" style="letter-spacing:-0.255px">Lease End Date :</div><div class="v" style="letter-spacing:0.049px">Jul 31, 2023</div></div>
</div></article>
<article class="card"><svg class="dots" viewBox="0.9 -0.9 24 24" fill="currentColor"><circle cx="5" cy="12" r="2.2"/><circle cx="12" cy="12" r="2.2"/><circle cx="19" cy="12" r="2.2"/></svg><svg class="avatar" viewBox="0 0 70 70" role="img" aria-label="Tenant photo"><path d="M9.1 66.600V50c0-3 1-4.500 3.500-5.300l8.700-2.600 4-2.900 10 25.300 9-25.300 5.500 3.400 8.600 2.300c2 .6 2.400 2.100 2.400 5.100v16.600z" fill="#14122b"/><path d="M25.300 39.200L35.300 64.500 44.300 39.200z" fill="#5cc4cc"/><path d="M25.300 39.200L30 38.300 35.100 40.500 40 38.300 44.300 39.200 37.200 47.500 35.100 43 33.200 47.500z" fill="#f3f6f9"/><path d="M33.600 42.300h2.800l1.500 12.100-2.600 9.900-2.600-9.900z" fill="#d8232f"/><ellipse cx="22.600" cy="24.600" rx="1.700" ry="2.800" fill="#f2c6a2"/><ellipse cx="47.400" cy="24.600" rx="1.700" ry="2.800" fill="#f2c6a2"/><path d="M23 14c0-5 5-8 12-8s12 3 12 8l-.6 10c-.3 2.500-1 4-1.800 5.500L44.100 32.900 38.300 39.100c-1.600 1.600-4.800 1.600-6.400 0L26.300 32.900 25.400 29.500c-.8-1.500-1.500-3-1.800-5.500z" fill="#f4caa7"/><path d="M23.400 23.500C22.500 20 21.800 17 22 14.300 22.500 8.500 28 5.200 34.300 5.200 41 5.200 47.300 8.500 47.800 15 48 18 47.300 21 46.400 23.500 45.500 21.500 44.500 20 43.500 18.600 42 16.800 40 15.700 38.200 15.700 35.500 15.700 33.500 18.600 30.700 18.600 28.500 18.600 27 17.500 25.200 16.800 24.300 19 23.800 21 23.400 23.500Z" fill="#0d0b0c"/></svg>
<h5 class="name" style="letter-spacing:0.117px">Abood Mahmood</h5><p class="email" style="letter-spacing:0.074px">abood2017@gmail.com</p><p class="addr" style="letter-spacing:-0.147px">456 Ocean Avenue, Miami, FL 12345</p>
<div class="grid">
<div class="f"><div class="k" style="letter-spacing:-0.210px">Phone :</div><div class="v" style="letter-spacing:0.059px">+1 (319) 313-2081</div></div>
<div class="f"><div class="k" style="letter-spacing:-0.064px">Family Member :</div><div class="v" style="letter-spacing:0.141px">5</div></div>
<div class="f"><div class="k" style="letter-spacing:-0.072px">Property :</div><div class="v" style="letter-spacing:-0.060px">987 Cantebury Drive</div></div>
<div class="f"><div class="k" style="letter-spacing:-0.146px">Unit :</div><div class="v" style="letter-spacing:0.005px">Unit 3</div></div>
<div class="f"><div class="k" style="letter-spacing:-0.135px">Lease Start Date :</div><div class="v" style="letter-spacing:0.040px">Jul 1, 2023</div></div>
<div class="f"><div class="k" style="letter-spacing:-0.255px">Lease End Date :</div><div class="v" style="letter-spacing:0.049px">Jul 31, 2023</div></div>
</div></article>
</div>
</section>
</main>
</body></html>
